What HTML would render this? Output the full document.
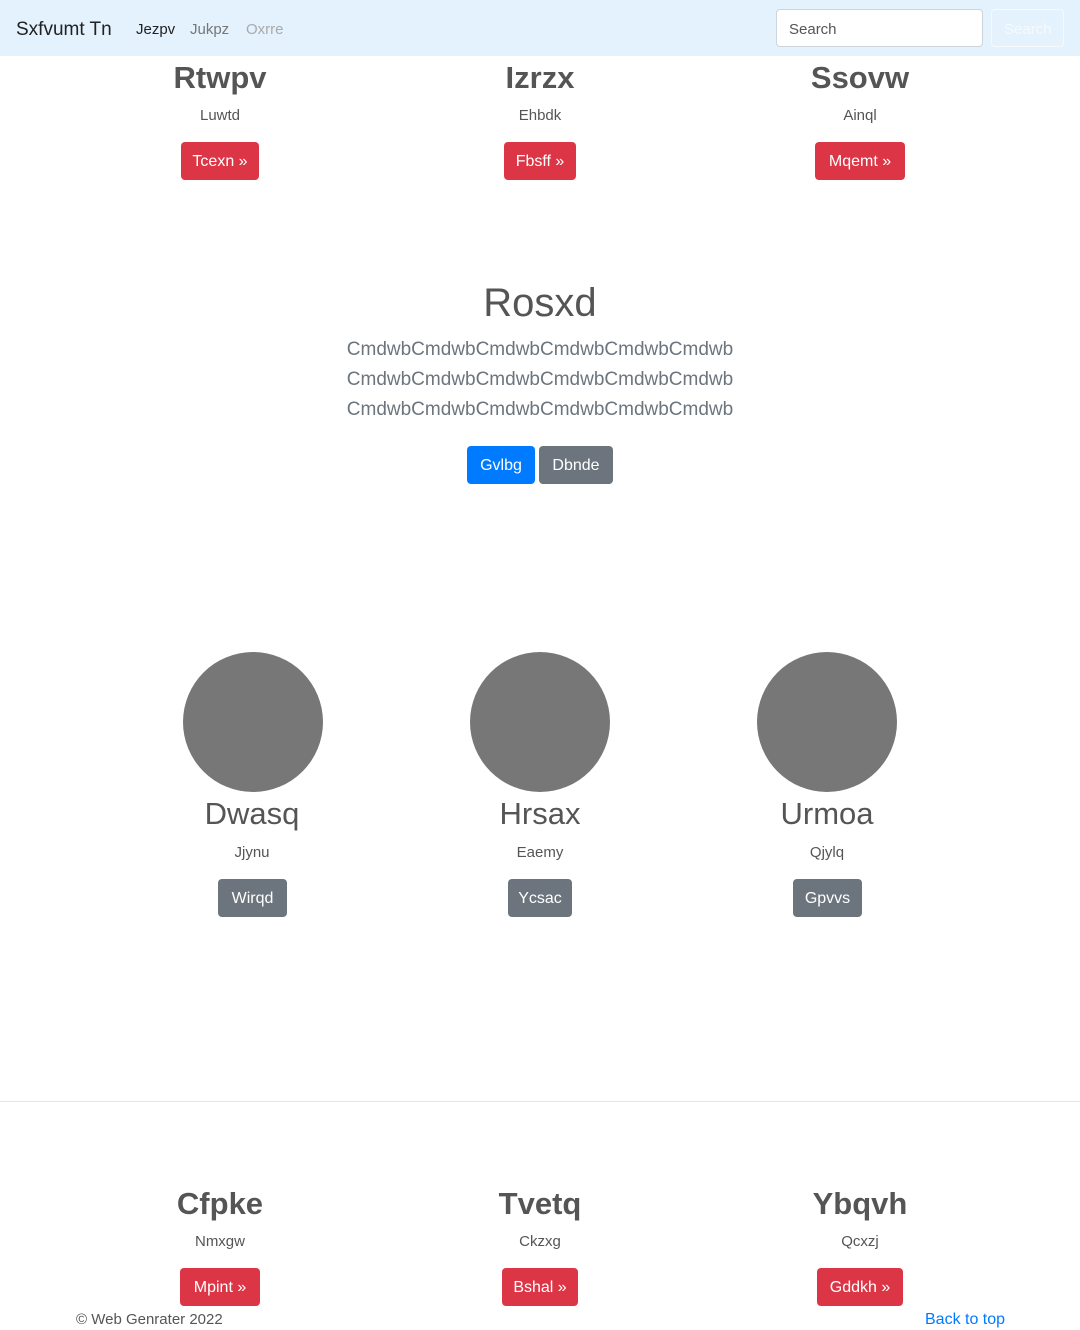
<!DOCTYPE html>
<html><head><meta charset="utf-8"><style>
*{box-sizing:border-box;margin:0;padding:0}
body{width:1080px;height:1330px;position:relative;background:#fff;font-family:"Liberation Sans",sans-serif;color:#555;overflow:hidden}
.a{position:absolute;text-align:center;white-space:nowrap}
nav{position:absolute;left:0;top:0;width:1080px;height:56px;background:#e3f2fd}
.btn{position:absolute;color:#fff;border-radius:4px;font-size:16px;line-height:40px;height:38px;text-align:center}
.red{background:#dc3545}.gray{background:#6c757d}.blue{background:#007bff}
h2{font-size:31px;font-weight:bold;color:#555}
.c{position:absolute;width:140px;height:140px;border-radius:50%;background:#777;top:652px}
</style></head><body>
<nav>
<div class="a" style="left:16px;top:19px;font-size:19px;color:#222">Sxfvumt Tn</div>
<div class="a" style="left:136px;top:21px;font-size:15px;color:#222">Jezpv</div>
<div class="a" style="left:190px;top:21px;font-size:15px;color:#777">Jukpz</div>
<div class="a" style="left:246px;top:21px;font-size:15px;color:#aaa">Oxrre</div>
<div style="position:absolute;left:776px;top:9px;width:207px;height:38px;background:#fff;border:1px solid #ced4da;border-radius:4px;font-size:15px;color:#555;padding:11px 12px">Search</div>
<div style="position:absolute;left:991px;top:9px;width:73px;height:38px;border:1px solid #f8f9fa;border-radius:4px;font-size:15px;color:#f8f9fa;padding:11px 12px">Search</div>
</nav>

<h2 class="a" style="left:120px;width:200px;top:60px">Rtwpv</h2>
<h2 class="a" style="left:440px;width:200px;top:60px">Izrzx</h2>
<h2 class="a" style="left:760px;width:200px;top:60px">Ssovw</h2>
<div class="a" style="left:120px;width:200px;top:107px;font-size:15px">Luwtd</div>
<div class="a" style="left:440px;width:200px;top:107px;font-size:15px">Ehbdk</div>
<div class="a" style="left:760px;width:200px;top:107px;font-size:15px">Ainql</div>
<div class="btn red" style="left:181px;top:142px;width:78px">Tcexn »</div>
<div class="btn red" style="left:504px;top:142px;width:72px">Fbsff »</div>
<div class="btn red" style="left:815px;top:142px;width:90px">Mqemt »</div>

<div class="a" style="left:0;width:1080px;top:281px;font-size:40px;font-weight:300;color:#555">Rosxd</div>
<div class="a" style="left:0;width:1080px;top:335px;font-size:19px;line-height:30px;color:#6c757d;font-weight:300">CmdwbCmdwbCmdwbCmdwbCmdwbCmdwb<br>CmdwbCmdwbCmdwbCmdwbCmdwbCmdwb<br>CmdwbCmdwbCmdwbCmdwbCmdwbCmdwb</div>
<div class="btn blue" style="left:467px;top:446px;width:68px">Gvlbg</div>
<div class="btn gray" style="left:539px;top:446px;width:74px">Dbnde</div>

<div class="c" style="left:183px"></div>
<div class="c" style="left:470px"></div>
<div class="c" style="left:757px"></div>
<div class="a" style="left:152px;width:200px;top:796px;font-size:31px">Dwasq</div>
<div class="a" style="left:440px;width:200px;top:796px;font-size:31px">Hrsax</div>
<div class="a" style="left:727px;width:200px;top:796px;font-size:31px">Urmoa</div>
<div class="a" style="left:152px;width:200px;top:844px;font-size:15px">Jjynu</div>
<div class="a" style="left:440px;width:200px;top:844px;font-size:15px">Eaemy</div>
<div class="a" style="left:727px;width:200px;top:844px;font-size:15px">Qjylq</div>
<div class="btn gray" style="left:218px;top:879px;width:69px">Wirqd</div>
<div class="btn gray" style="left:508px;top:879px;width:64px">Ycsac</div>
<div class="btn gray" style="left:793px;top:879px;width:69px">Gpvvs</div>

<div style="position:absolute;left:0;top:1101px;width:1080px;border-top:1px solid #e5e5e5"></div>

<h2 class="a" style="left:120px;width:200px;top:1186px">Cfpke</h2>
<h2 class="a" style="left:440px;width:200px;top:1186px">Tvetq</h2>
<h2 class="a" style="left:760px;width:200px;top:1186px">Ybqvh</h2>
<div class="a" style="left:120px;width:200px;top:1233px;font-size:15px">Nmxgw</div>
<div class="a" style="left:440px;width:200px;top:1233px;font-size:15px">Ckzxg</div>
<div class="a" style="left:760px;width:200px;top:1233px;font-size:15px">Qcxzj</div>
<div class="btn red" style="left:180px;top:1268px;width:80px">Mpint »</div>
<div class="btn red" style="left:502px;top:1268px;width:76px">Bshal »</div>
<div class="btn red" style="left:817px;top:1268px;width:86px">Gddkh »</div>

<div class="a" style="left:76px;top:1311px;font-size:15px">© Web Genrater 2022</div>
<div class="a" style="left:925px;top:1311px;font-size:16px;color:#007bff">Back to top</div>
</body></html>
